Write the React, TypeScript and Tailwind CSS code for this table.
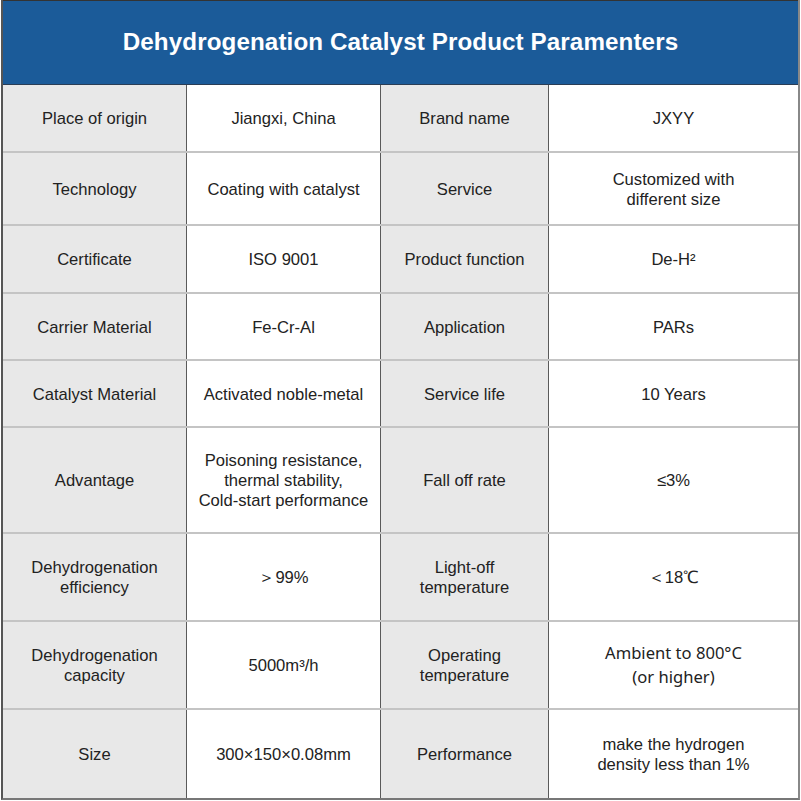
import React from "react";

type Row = { h: string; cells: React.ReactNode[] };

const rows: Row[] = [
  { h: "h-[68px]", cells: ["Place of origin", "Jiangxi, China", "Brand name", "JXYY"] },
  { h: "h-[73px]", cells: ["Technology", "Coating with catalyst", "Service", <>Customized with<br />different size</>] },
  { h: "h-[68px]", cells: ["Certificate", "ISO 9001", "Product function", "De-H²"] },
  { h: "h-[67px]", cells: ["Carrier Material", "Fe-Cr-Al", "Application", "PARs"] },
  { h: "h-[67px]", cells: ["Catalyst Material", "Activated noble-metal", "Service life", "10 Years"] },
  { h: "h-[106px]", cells: ["Advantage", <>Poisoning resistance,<br />thermal stability,<br />Cold-start performance</>, "Fall off rate", "≤3%"] },
  { h: "h-[88px]", cells: [<>Dehydrogenation<br />efficiency</>, "＞99%", <>Light-off<br />temperature</>, "＜18℃"] },
  { h: "h-[88px]", cells: [<>Dehydrogenation<br />capacity</>, "5000m³/h", <>Operating<br />temperature</>, <span className="block -mt-[2px] text-[16.6px] leading-[24px]" style={{ fontFamily: '"Noto Sans", sans-serif' }}>Ambient to 800°C<br />(or higher)</span>] },
  { h: "h-[88px]", cells: ["Size", "300×150×0.08mm", "Performance", <>make the hydrogen<br />density less than 1%</>] },
];

const colW = ["w-[184px]", "w-[194px]", "w-[168px]", "w-[250px]"];
const colBg = ["bg-[#e8e8e8]", "bg-white", "bg-[#e8e8e8]", "bg-white"];

export default function App() {
  return (
    <div className="w-[801px] h-[801px] bg-white" style={{ fontFamily: '"Liberation Sans", Arial, sans-serif' }}>
      <div className="w-[799px] ml-px border-l-2 border-[#555] border-r-2 border-r-[#888] border-b-2 border-b-[#777]">
        <div className="h-[85px] bg-[#1b5b99] border-t border-[#333] border-b border-b-[#2a3d55] flex items-center justify-center">
          <h1 className="text-white font-bold text-[24.2px] tracking-[0.1px]">Dehydrogenation Catalyst Product Paramenters</h1>
        </div>
        {rows.map((r, i) => (
          <div key={i} className={`flex ${r.h} ${i < rows.length - 1 ? "border-b-2 border-[#c4c4c4]" : ""}`}>
            {r.cells.map((c, j) => (
              <div
                key={j}
                className={`${colW[j]} ${colBg[j]} ${j < 3 ? "border-r border-[#5a5a5a]" : "flex-1"} flex items-center justify-center pt-[2px] text-center text-[16.6px] leading-[20px] text-[#222]`}
              >
                <div>{c}</div>
              </div>
            ))}
          </div>
        ))}
      </div>
    </div>
  );
}
